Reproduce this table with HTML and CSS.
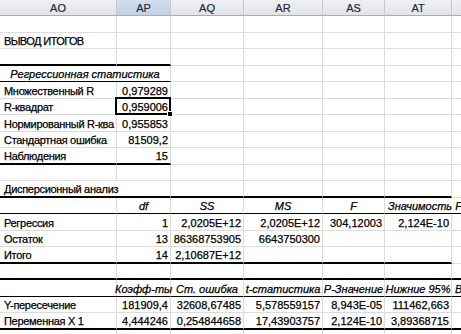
FILE: index.html
```html
<!DOCTYPE html>
<html>
<head>
<meta charset="utf-8">
<link rel="stylesheet" href="styles.css">
</head>
<body>
<div class="sheet">
  <div class="h">AO</div><div class="h sel">AP</div><div class="h">AQ</div><div class="h">AR</div><div class="h">AS</div><div class="h">AT</div><div class="h"></div>

  <div class="c"></div><div class="c"></div><div class="c"></div><div class="c"></div><div class="c"></div><div class="c"></div><div class="c"></div>

  <div class="c t caps">ВЫВОД ИТОГОВ</div><div class="c"></div><div class="c"></div><div class="c"></div><div class="c"></div><div class="c"></div><div class="c"></div>

  <div class="c k"></div><div class="c k"></div><div class="c"></div><div class="c"></div><div class="c"></div><div class="c"></div><div class="c"></div>

  <div class="c i s2 b">Регрессионная статистика</div><div class="c"></div><div class="c"></div><div class="c"></div><div class="c"></div><div class="c"></div>

  <div class="c t">Множественный R</div><div class="c n">0,979289</div><div class="c"></div><div class="c"></div><div class="c"></div><div class="c"></div><div class="c"></div>

  <div class="c t">R-квадрат</div><div class="c n active">0,959006</div><div class="c"></div><div class="c"></div><div class="c"></div><div class="c"></div><div class="c"></div>

  <div class="c t">Нормированный R-ква</div><div class="c n">0,955853</div><div class="c"></div><div class="c"></div><div class="c"></div><div class="c"></div><div class="c"></div>

  <div class="c t">Стандартная ошибка</div><div class="c n">81509,2</div><div class="c"></div><div class="c"></div><div class="c"></div><div class="c"></div><div class="c"></div>

  <div class="c t k">Наблюдения</div><div class="c n k">15</div><div class="c"></div><div class="c"></div><div class="c"></div><div class="c"></div><div class="c"></div>

  <div class="c"></div><div class="c"></div><div class="c"></div><div class="c"></div><div class="c"></div><div class="c"></div><div class="c"></div>

  <div class="c t s2 k">Дисперсионный анализ</div><div class="c k"></div><div class="c k"></div><div class="c k"></div><div class="c k"></div><div class="c"></div>

  <div class="c b"></div><div class="c i b">df</div><div class="c i b">SS</div><div class="c i b">MS</div><div class="c i b">F</div><div class="c i l s2 b">Значимость F</div>

  <div class="c t">Регрессия</div><div class="c n">1</div><div class="c n">2,0205E+12</div><div class="c n">2,0205E+12</div><div class="c n">304,12003</div><div class="c n">2,124E-10</div><div class="c"></div>

  <div class="c t">Остаток</div><div class="c n">13</div><div class="c n">86368753905</div><div class="c n">6643750300</div><div class="c"></div><div class="c"></div><div class="c"></div>

  <div class="c t k">Итого</div><div class="c n k">14</div><div class="c n k">2,10687E+12</div><div class="c k"></div><div class="c k"></div><div class="c k"></div><div class="c"></div>

  <div class="c k"></div><div class="c k"></div><div class="c k"></div><div class="c k"></div><div class="c k"></div><div class="c k"></div><div class="c k"></div>

  <div class="c b"></div><div class="c i b shift">Коэфф-ты</div><div class="c i b">Ст. ошибка</div><div class="c i b">t-статистика</div><div class="c i b">P-Значение</div><div class="c i b">Нижние 95%</div><div class="c i l b">Верхние 95%</div>

  <div class="c t">Y-пересечение</div><div class="c n">181909,4</div><div class="c n">32608,67485</div><div class="c n">5,578559157</div><div class="c n">8,943E-05</div><div class="c n">111462,663</div><div class="c"></div>

  <div class="c t k">Переменная X 1</div><div class="c n k">4,444246</div><div class="c n k">0,254844658</div><div class="c n k">17,43903757</div><div class="c n k">2,124E-10</div><div class="c n k">3,89368715</div><div class="c k"></div>

  <div class="c"></div><div class="c"></div><div class="c"></div><div class="c"></div><div class="c"></div><div class="c"></div><div class="c"></div>
</div>
</body>
</html>
```
FILE: styles.css
```css
html, body {
  margin: 0;
  padding: 0;
  background: #ffffff;
  overflow: hidden;
}

.sheet {
  display: grid;
  grid-template-columns: 117px 54px 73px 79px 62px 67px 67px;
  grid-template-rows: 16px 17px 16px 17px 16px 17px 16px 17px 16px 17px 16px 17px 16px 17px 16px 17px 16px 17px 16px 17px 20px;
  width: 461px;
  height: 334px;
  overflow: hidden;
  font-family: "Liberation Sans", Arial, sans-serif;
  font-size: 11px;
  color: #000;
  -webkit-text-stroke: 0.25px #000;
}

.h {
  box-sizing: border-box;
  background: linear-gradient(#eef0f3, #e1e3e7);
  border-right: 1px solid #c5c8cc;
  border-bottom: 1px solid #a9adb3;
  display: flex;
  align-items: center;
  justify-content: center;
  color: #1e2a38;
  -webkit-text-stroke: 0.2px #1e2a38;
  font-size: 11px;
}

.h.sel {
  background: linear-gradient(#d3deec, #c2d1e5);
}

.c {
  box-sizing: border-box;
  border-right: 1px solid #dcdcdc;
  border-bottom: 1px solid #dcdcdc;
  display: flex;
  align-items: flex-end;
  justify-content: flex-start;
  white-space: nowrap;
  line-height: 12px;
  padding: 0 2px 1px 2px;
  min-width: 0;
}

.t {
  padding-left: 4px;
  letter-spacing: -0.3px;
  overflow: hidden;
}

.caps {
  letter-spacing: -0.6px;
}

.s2 {
  grid-column: span 2;
  overflow: visible;
}

.n {
  justify-content: flex-end;
}

.i {
  font-style: italic;
  justify-content: center;
}

.i.l {
  justify-content: flex-start;
  padding-left: 3px;
}

.shift {
  justify-content: flex-start;
  padding-left: 0;
  margin-left: -2px;
}

.k {
  border-bottom: 2px solid #000;
}

.b {
  border-bottom: 1px solid #000;
}

.active {
  position: relative;
  overflow: visible;
}

.active::after {
  content: "";
  position: absolute;
  left: -2px;
  top: -2px;
  right: -1px;
  bottom: -1px;
  border: 2px solid #000;
}

.active::before {
  content: "";
  position: absolute;
  right: -3px;
  bottom: -3px;
  width: 4px;
  height: 4px;
  background: #000;
  border: 1px solid #fff;
  z-index: 2;
}
```
